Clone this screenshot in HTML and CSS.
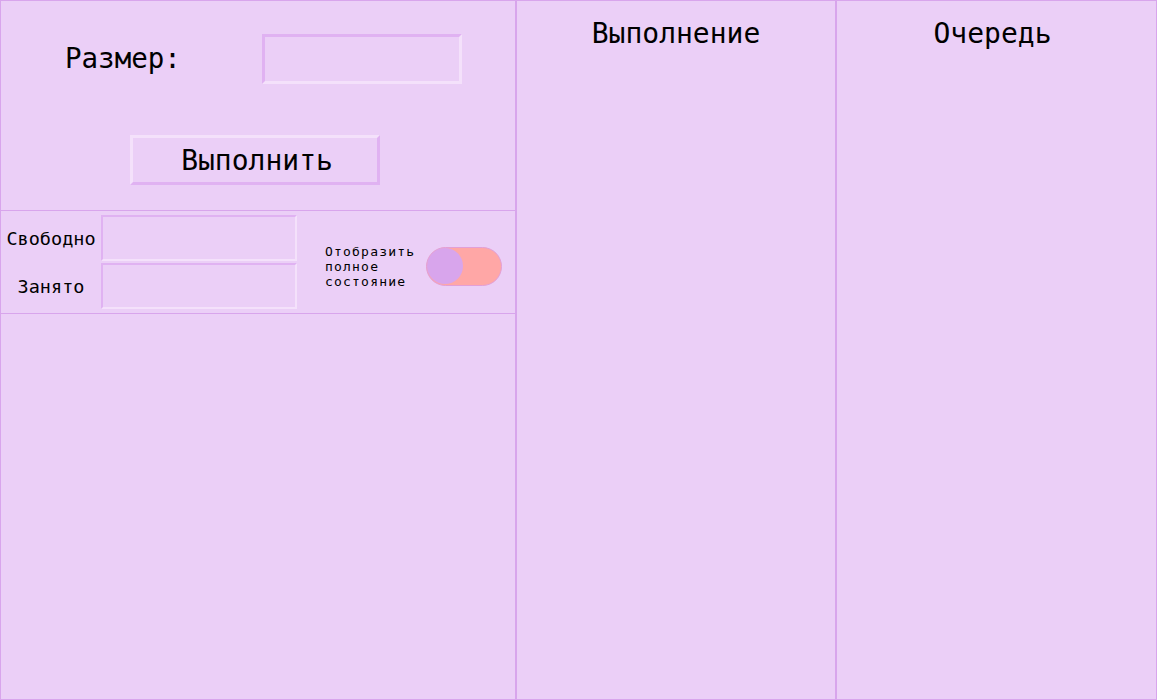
FILE: index.html
```html
<!DOCTYPE html>
<html lang="ru">
<head>
<meta charset="utf-8">
<title>Память</title>
<link rel="stylesheet" href="styles.css">
</head>
<body>
<div class="app">
  <section class="panel panel-left">
    <div class="controls">
      <div class="size-row">
        <label class="size-label" for="size">Размер:</label>
        <input class="field field-size" id="size" type="text">
      </div>
      <button class="run-btn" type="button">Выполнить</button>
    </div>
    <div class="memory">
      <div class="mem-grid">
        <span class="mem-label">Свободно</span>
        <input class="field field-mem" type="text">
        <span class="mem-label">Занято</span>
        <input class="field field-mem" type="text">
      </div>
      <div class="toggle-wrap">
        <span class="toggle-text">Отобразить<br>полное<br>состояние</span>
        <div class="toggle"><div class="knob"></div></div>
      </div>
    </div>
    <div class="state"></div>
  </section>
  <section class="panel panel-mid">
    <h2 class="panel-title">Выполнение</h2>
  </section>
  <section class="panel panel-right">
    <h2 class="panel-title panel-title-queue">Очередь</h2>
  </section>
</div>
</body>
</html>
```
FILE: styles.css
```css
html, body {
  margin: 0;
  padding: 0;
  background: #ebcff7;
}
body {
  font-family: "DejaVu Sans Mono", monospace;
  color: #000;
}
.app {
  display: flex;
  height: 700px;
  width: 1157px;
}
.panel {
  box-sizing: border-box;
  height: 700px;
  border: 1px solid #d8a5ec;
  background: #ebcff7;
  display: flex;
  flex-direction: column;
}
.panel-left { width: 516px; }
.panel-mid { width: 320px; }
.panel-right { flex: 1; }

.panel-title {
  margin: 0;
  padding-top: 16px;
  font-size: 28px;
  font-weight: normal;
  line-height: normal;
  text-align: center;
}
.panel-title-queue {
  padding-right: 8px;
}

.controls {
  border-bottom: 1px solid #d8a5ec;
  display: flex;
  flex-direction: column;
  padding-top: 33px;
  box-sizing: border-box;
  height: 210px;
}
.size-row {
  display: flex;
  align-items: center;
  padding-left: 64px;
}
.size-label {
  font-size: 27.5px;
  width: 197px;
  margin-top: -3px;
}
.field {
  box-sizing: border-box;
  background: #ebcff7;
  outline: none;
  margin: 0;
  padding: 0;
  font-family: inherit;
  border-style: solid;
  border-color: #e0b2f2 #f4e1fb #f4e1fb #e0b2f2;
}
.field-size {
  width: 200px;
  height: 50px;
  border-width: 3px;
}
.run-btn {
  box-sizing: border-box;
  margin: 51px 0 0 129px;
  width: 250px;
  height: 50px;
  padding: 0 0 0 4px;
  background: #ebcff7;
  border: 3px solid;
  border-color: #f4e1fb #e0b2f2 #e0b2f2 #f4e1fb;
  font-family: inherit;
  font-size: 28px;
  color: #000;
}

.memory {
  display: flex;
  height: 103px;
  box-sizing: border-box;
  border-bottom: 1px solid #d8a5ec;
  padding: 4px 0;
}
.mem-grid {
  display: grid;
  grid-template-columns: 100px 196px;
  grid-template-rows: 46px 46px;
  row-gap: 2px;
  align-items: center;
}
.mem-label {
  font-size: 18.5px;
  text-align: center;
}
.field-mem {
  width: 196px;
  height: 46px;
  border-width: 2px;
}
.toggle-wrap {
  display: flex;
  align-items: center;
  padding-left: 28px;
  padding-top: 8px;
}
.toggle-text {
  font-size: 13px;
  line-height: 15px;
  letter-spacing: 1.2px;
  width: 101px;
}
.toggle {
  box-sizing: border-box;
  width: 76px;
  height: 39px;
  border-radius: 20px;
  border: 1px solid #e39fd6;
  background: #ffa7a6;
  display: flex;
  align-items: center;
}
.knob {
  width: 36px;
  height: 36px;
  border-radius: 50%;
  background: #d8a5ec;
}
.state {
  flex: 1;
}
```
